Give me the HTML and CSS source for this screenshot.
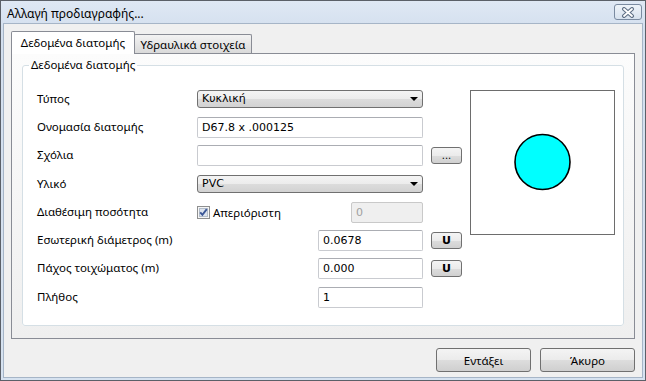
FILE: index.html
```html
<!DOCTYPE html>
<html lang="el">
<head>
    <meta charset="UTF-8">
    <meta name="viewport" content="width=device-width, initial-scale=1.0">
    <title>Αλλαγή προδιαγραφής...</title>
    <link rel="stylesheet" href="styles.css">
</head>
<body>
    <div class="window">
        <div class="titlebar">
            <span class="title">Αλλαγή προδιαγραφής...</span>
            <button type="button" class="close" aria-label="Κλείσιμο">
                <svg width="14" height="11" viewBox="0 0 14 11">
                    <path d="M3 2 L11 9 M11 2 L3 9" stroke="#5f6f85" stroke-width="4" stroke-linecap="round" fill="none"/>
                    <path d="M3 2 L11 9 M11 2 L3 9" stroke="#ffffff" stroke-width="1.8" stroke-linecap="round" fill="none"/>
                </svg>
            </button>
        </div>

        <div class="client">
            <div class="tabs">
                <div class="tab active">Δεδομένα διατομής</div>
                <div class="tab">Υδραυλικά στοιχεία</div>
            </div>

            <div class="tabpage">
                <fieldset class="group">
                    <legend>Δεδομένα διατομής</legend>
                    <div class="form">
                        <div class="preview">
                            <svg width="143" height="143" viewBox="0 0 143 143">
                                <circle cx="71.5" cy="71" r="27.5" fill="#00ffff" stroke="#000" stroke-width="1.6"/>
                            </svg>
                        </div>

                        <label class="lbl">Τύπος</label>
                        <div class="combo">Κυκλική<span class="arrow"></span></div>

                        <label class="lbl">Ονομασία διατομής</label>
                        <input class="field" type="text" value="D67.8 x .000125">

                        <label class="lbl">Σχόλια</label>
                        <input class="field" type="text" value="">
                        <button type="button" class="small">...</button>

                        <label class="lbl">Υλικό</label>
                        <div class="combo">PVC<span class="arrow"></span></div>

                        <label class="lbl">Διαθέσιμη ποσότητα</label>
                        <div class="qty">
                            <span class="check">
                                <svg width="13" height="13" viewBox="0 0 13 13">
                                    <rect x="0.5" y="0.5" width="12" height="12" fill="#f6f6f6" stroke="#8e8f8f"/>
                                    <rect x="2.5" y="2.5" width="8" height="8" fill="#dde4ee" stroke="#b3bdca"/>
                                    <path d="M3.2 6.3 L5.4 8.8 L9.8 3.2" fill="none" stroke="#3b5797" stroke-width="1.9"/>
                                </svg>
                                Απεριόριστη
                            </span>
                            <input class="field disabled" type="text" value="0" disabled>
                        </div>

                        <label class="lbl">Εσωτερική διάμετρος (m)</label>
                        <input class="field short" type="text" value="0.0678">
                        <button type="button" class="small bold">U</button>

                        <label class="lbl">Πάχος τοιχώματος (m)</label>
                        <input class="field short" type="text" value="0.000">
                        <button type="button" class="small bold">U</button>

                        <label class="lbl">Πλήθος</label>
                        <input class="field short" type="text" value="1">
                    </div>
                </fieldset>
            </div>

            <div class="actions">
                <button type="button" class="btn">Εντάξει</button>
                <button type="button" class="btn">Άκυρο</button>
            </div>
        </div>
    </div>
</body>
</html>
```

FILE: styles.css
```css
* {
    box-sizing: border-box;
}

body {
    margin: 0;
    font-family: "Noto Sans", "DejaVu Sans", sans-serif;
    font-size: 11.5px;
    color: #000;
    background: #fff;
}

.window {
    width: 646px;
    height: 381px;
    border: 1px solid #5b6068;
    background: linear-gradient(#dfe8f4, #d3dfee 30px, #d6e2f0);
    padding: 0 2px 2px;
    display: flex;
    flex-direction: column;
}

.titlebar {
    height: 22px;
    display: flex;
    align-items: center;
    justify-content: space-between;
    padding: 0 1px 0 4px;
}

.title {
    font-size: 12px;
    padding-top: 3px;
}

.close {
    width: 28px;
    height: 16px;
    padding: 0;
    border: 1px solid #7a8aa0;
    border-radius: 3px;
    background: linear-gradient(#eef3f9, #d8e2ee);
    display: flex;
    align-items: center;
    justify-content: center;
}

.client {
    flex: 1;
    border: 1px solid #a6b5c7;
    background: #f0f0f0;
    padding: 7px 7px 5px;
    display: flex;
    flex-direction: column;
}

/* tabs */
.tabs {
    display: flex;
    align-items: flex-end;
    height: 22px;
}

.tab {
    height: 19px;
    width: 118px;
    margin-left: -1px;
    border: 1px solid #898c95;
    border-bottom: none;
    border-radius: 2px 2px 0 0;
    background: linear-gradient(#f3f3f3, #e6e6e6 50%, #dadada);
    display: flex;
    align-items: center;
    justify-content: center;
    white-space: nowrap;
}

.tab.active {
    position: relative;
    z-index: 1;
    width: 124px;
    height: 23px;
    margin-left: 0;
    margin-bottom: -1px;
    background: #fff;
    padding-bottom: 1px;
}

.tabpage {
    height: 286px;
    border: 1px solid #898c95;
    background: linear-gradient(#fcfcfc, #efefef);
    padding: 3px 10px 12px;
    display: flex;
    flex-direction: column;
}

.group {
    flex: 1;
    min-width: 0;
    margin: 0;
    border: 1px solid #d5dfe5;
    border-radius: 3px;
    background: #fff;
    padding: 12px 7px 0 6px;
}

.group legend {
    padding: 0 2px;
    line-height: 16px;
}

/* form grid */
.form {
    margin-left: 8px;
    display: grid;
    grid-template-columns: 152px 226px 31px 145px;
    grid-auto-rows: 28.3px;
    column-gap: 8px;
    align-items: center;
}

.lbl {
    grid-column: 1;
    white-space: nowrap;
    padding-bottom: 2px;
}

.combo,
.field,
.qty {
    grid-column: 2;
}

.combo {
    position: relative;
    height: 18px;
    border: 1px solid #707070;
    border-radius: 3px;
    background: linear-gradient(#f4f4f4, #ececec 50%, #dcdcdc 51%, #d2d2d2);
    font-family: "DejaVu Sans", sans-serif;
    font-size: 11px;
    line-height: 16px;
    padding-left: 4px;
}

.arrow {
    position: absolute;
    right: 4px;
    top: 6px;
    border-left: 4px solid transparent;
    border-right: 4px solid transparent;
    border-top: 4px solid #000;
}

.field {
    height: 21px;
    width: 100%;
    margin: 0;
    border: 1px solid #c9cbd0;
    border-top-color: #abadb3;
    border-radius: 2px;
    background: #fff;
    padding: 0 4px;
    font-family: "DejaVu Sans", sans-serif;
    font-size: 11px;
    color: #000;
    outline: none;
}

.field.short {
    width: 105px;
    justify-self: end;
}

.field.disabled {
    width: 72px;
    background: #efefef;
    border-color: #c9c9c9;
    color: #a0a0a0;
}

.qty {
    display: flex;
    align-items: center;
    justify-content: space-between;
}

.check {
    display: flex;
    align-items: center;
    gap: 3px;
}

.check svg {
    display: block;
}

.small {
    grid-column: 3;
    height: 17px;
    width: 31px;
    padding: 0;
    border: 1px solid #707070;
    border-radius: 3px;
    background: linear-gradient(#f4f4f4, #ebebeb 50%, #dddddd 51%, #d0d0d0);
    font-family: "DejaVu Sans", sans-serif;
    font-size: 10px;
    line-height: 13px;
    color: #000;
}

.small.bold {
    font-weight: bold;
    font-size: 11px;
}

.preview {
    grid-column: 4;
    grid-row: 1 / span 6;
    align-self: start;
    margin-top: 5px;
    width: 145px;
    height: 145px;
    border: 1px solid #6d6d6d;
    background: #fff;
}

.preview svg {
    display: block;
}

/* dialog buttons */
.actions {
    display: flex;
    justify-content: flex-end;
    gap: 9px;
    margin-top: 9px;
}

.btn {
    width: 95px;
    height: 24px;
    border: 1px solid #707070;
    border-radius: 3px;
    background: linear-gradient(#f4f4f4, #ebebeb 50%, #dddddd 51%, #cfcfcf);
    font-family: "Noto Sans", "DejaVu Sans", sans-serif;
    font-size: 11.5px;
    color: #000;
    padding: 0;
}
```
